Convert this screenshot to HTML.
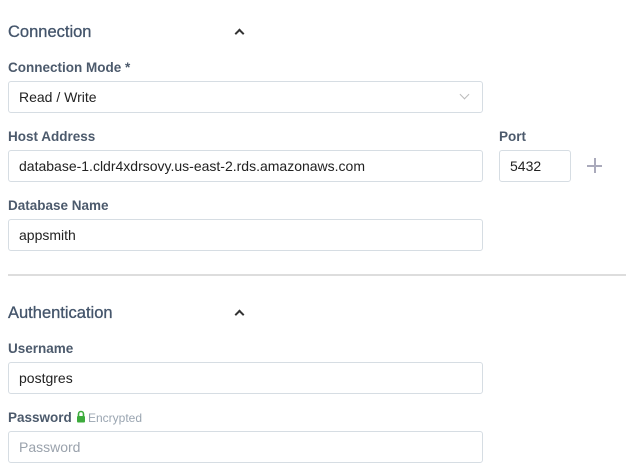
<!DOCTYPE html>
<html><head><style>
body{margin:0;width:626px;height:474px;background:#fff;font-family:"Liberation Sans","DejaVu Sans",sans-serif;position:relative;overflow:hidden}
.a{position:absolute}
.h{font-size:16.5px;color:#44556b;left:8px;-webkit-text-stroke:0.3px #44556b}
.l{font-size:13.5px;font-weight:bold;color:#4c5a6c;left:8px}
.i{border:1px solid #d6dde3;border-radius:3px;box-sizing:border-box;height:32px;font-size:14px;color:#222;padding-left:10px;line-height:30px}
.chev{width:5px;height:5px;border-left:2px solid #333;border-top:2px solid #333;transform:rotate(45deg)}
</style></head><body>
<div class="a h" style="top:23px">Connection</div>
<div class="a chev" style="left:236px;top:30px"></div>
<div class="a l" style="top:60px">Connection Mode *</div>
<div class="a i" style="left:8px;top:81px;width:475px">Read / Write</div>
<div class="a" style="left:461px;top:91px;width:6px;height:6px;border-right:1.5px solid #bbb;border-bottom:1.5px solid #bbb;transform:rotate(45deg)"></div>
<div class="a l" style="top:129px">Host Address</div>
<div class="a l" style="top:129px;left:499px">Port</div>
<div class="a i" style="left:8px;top:150px;width:475px">database-1.cldr4xdrsovy.us-east-2.rds.amazonaws.com</div>
<div class="a i" style="left:499px;top:150px;width:72px">5432</div>
<div class="a" style="left:587px;top:165px;width:15px;height:1.5px;background:#aab"></div>
<div class="a" style="left:594px;top:158px;width:1.5px;height:15px;background:#aab"></div>
<div class="a l" style="top:198px">Database Name</div>
<div class="a i" style="left:8px;top:219px;width:475px">appsmith</div>
<div class="a" style="left:8px;top:274px;width:618px;height:2px;background:#ddd"></div>
<div class="a h" style="top:304px">Authentication</div>
<div class="a chev" style="left:236px;top:311px"></div>
<div class="a l" style="top:341px">Username</div>
<div class="a i" style="left:8px;top:362px;width:475px">postgres</div>
<div class="a l" style="top:410px">Password</div>
<svg class="a" style="left:76px;top:410px" width="10" height="13" viewBox="0 0 10 13"><path d="M2.5 6V4a2.5 2.5 0 0 1 5 0v2" fill="none" stroke="#3cab3c" stroke-width="1.6"/><rect x="1" y="6" width="8" height="6.5" rx="1" fill="#3cab3c"/></svg>
<div class="a" style="left:88px;top:411px;font-size:12px;color:#9aa5b1">Encrypted</div>
<div class="a i" style="left:8px;top:431px;width:475px;color:#9aa2ac">Password</div>
</body></html>
